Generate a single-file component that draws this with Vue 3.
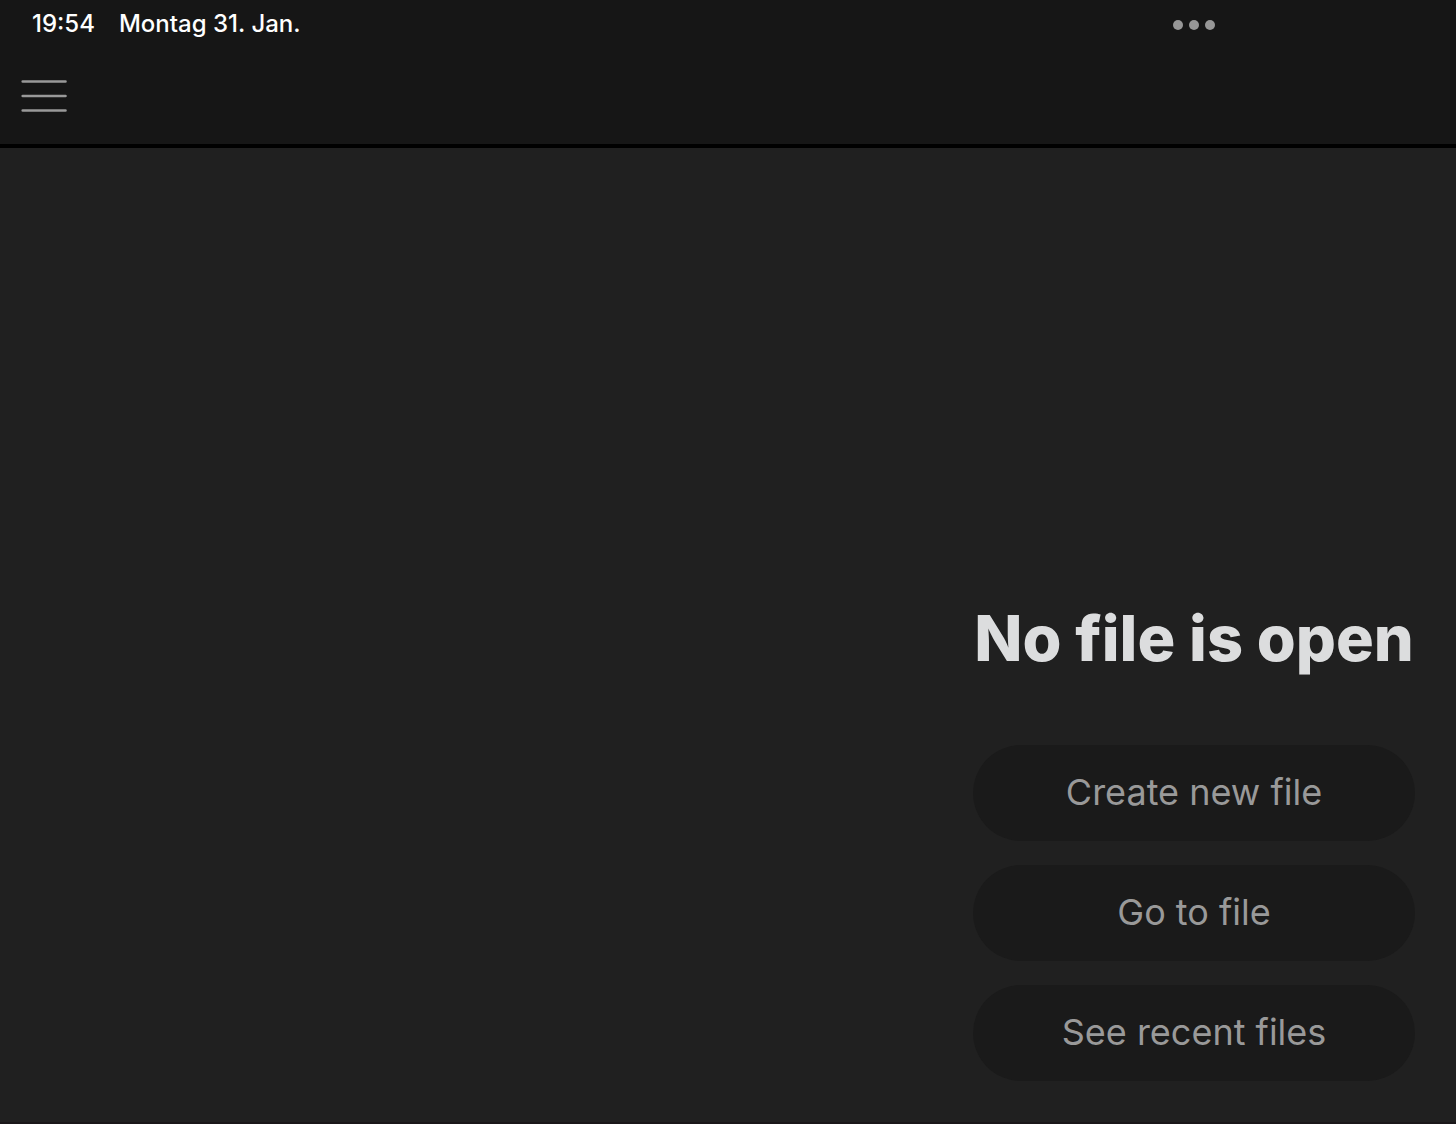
<script setup>
const actions = ['Create new file', 'Go to file', 'See recent files']
</script>

<template>
  <div class="app">
    <header class="top">
      <div class="status">
        <time class="clock">19:54</time>
        <span class="date">Montag 31. Jan.</span>
        <button class="dots" type="button" aria-label="Multitasking">
          <svg width="42" height="10" viewBox="0 0 42 10" aria-hidden="true">
            <circle cx="5" cy="5" r="5" />
            <circle cx="21" cy="5" r="5" />
            <circle cx="37" cy="5" r="5" />
          </svg>
        </button>
      </div>
      <button class="menu" type="button" aria-label="Open menu">
        <svg width="46" height="32" viewBox="0 0 46 32" aria-hidden="true">
          <path d="M1.7 1.5H44.5M1.7 16H44.5M1.7 30.5H44.5" />
        </svg>
      </button>
    </header>
    <main class="empty">
      <section class="panel">
        <h1>No file is open</h1>
        <button v-for="action in actions" :key="action" class="action" type="button">{{ action }}</button>
      </section>
    </main>
  </div>
</template>

<style>
body {
  background: #202020;
}
</style>

<style scoped>
.app {
  display: flex;
  flex-direction: column;
  min-height: 100vh;
  box-sizing: border-box;
  border-bottom: 2px solid #1a1719;
  background: #202020;
  font-family: Inter, "Liberation Sans", sans-serif;
}
button {
  border: 0;
  padding: 0;
  background: none;
  font-family: inherit;
  cursor: pointer;
}
svg {
  display: block;
}
.top {
  background: #161616;
  border-bottom: 4px solid #000;
  padding-bottom: 32px;
}
.status {
  display: flex;
  align-items: flex-start;
  height: 40px;
  padding: 8px 241px 0 32px;
  color: #fff;
  font-size: 24px;
  font-weight: 500;
  line-height: 32px;
}
.clock {
  font-feature-settings: "case";
}
.date {
  margin-left: 24px;
}
.dots {
  margin-left: auto;
  padding: 12px 0 8px;
  fill: #979797;
}
.menu {
  display: block;
  margin: 32px 0 0 21px;
  stroke: #999;
  stroke-width: 2.6;
  stroke-linecap: round;
}
.empty {
  flex: 1;
  display: flex;
  align-items: flex-end;
  justify-content: flex-end;
  padding: 0 41px;
}
.panel {
  display: flex;
  flex-direction: column;
  gap: 24px;
  width: 442px;
  padding-bottom: 41px;
}
h1 {
  margin: 0 0 43px;
  color: #dcddde;
  font-size: 63px;
  font-weight: 800;
  line-height: 80px;
  text-align: center;
  white-space: nowrap;
}
.action {
  height: 96px;
  padding-bottom: 2px;
  border-radius: 48px;
  background: #1a1a1a;
  color: #999;
  font-size: 36px;
}
</style>
